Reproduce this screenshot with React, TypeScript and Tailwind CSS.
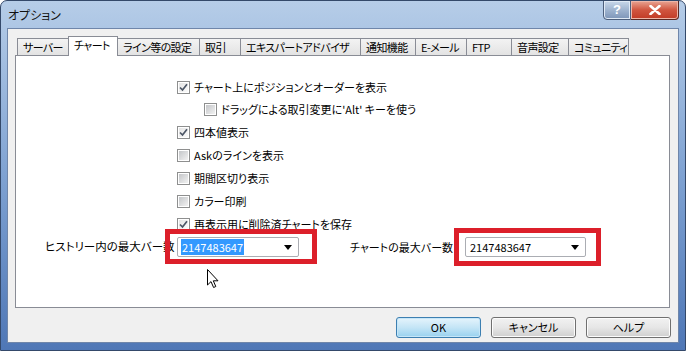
import React from 'react'

const TABS = [
  { label: 'サーバー', w: 52 },
  { label: 'チャート', w: 50, active: true },
  { label: 'ライン等の設定', w: 83 },
  { label: '取引', w: 42 },
  { label: 'エキスパートアドバイザ', w: 121 },
  { label: '通知機能', w: 56 },
  { label: 'E-メール', w: 52 },
  { label: 'FTP', w: 46 },
  { label: '音声設定', w: 58 },
  { label: 'コミュニティ', w: 61 },
]

const OPTIONS = [
  { label: 'チャート上にポジションとオーダーを表示', checked: true, h: 'h-[21px]' },
  { label: "ドラッグによる取引変更に'Alt' キーを使う", checked: false, sub: true },
  { label: '四本値表示', checked: true },
  { label: 'Askのラインを表示', checked: false },
  { label: '期間区切り表示', checked: false },
  { label: 'カラー印刷', checked: false },
  { label: '再表示用に削除済チャートを保存', checked: true },
]

function CheckBox({ checked }: { checked: boolean }) {
  return (
    <span className="w-[13px] h-[13px] border border-[#8e8f8f] bg-white p-px flex-shrink-0 flex">
      <span
        className={`flex-1 flex items-center justify-center bg-gradient-to-br ${
          checked ? 'from-[#e4e4e4] to-[#fbfbfb]' : 'from-[#c4c6c9] to-[#f2f2f2]'
        }`}
      >
        {checked && (
          <svg width="9" height="9" viewBox="0 0 9 9">
            <path d="M1 4.5 L3.5 7 L8 1.2" fill="none" stroke="#4c5666" strokeWidth="1.7" />
          </svg>
        )}
      </span>
    </span>
  )
}

function Combo({ value, selected, w }: { value: string; selected?: boolean; w: string }) {
  return (
    <div className={`${w} h-[20px] border border-[#abadb3] rounded-[2px] bg-white flex items-center pl-[3px] pr-[6px]`}>
      <span className={`flex-1 leading-[14px] ${selected ? '' : 'pl-px'}`}>
        <span className={selected ? 'bg-[#3399ff] text-white px-px' : ''}>{value}</span>
      </span>
      <svg width="8" height="5" viewBox="0 0 8 5">
        <path d="M0 0 H8 L4 5 Z" fill="#000" />
      </svg>
    </div>
  )
}

function Button({ label, primary }: { label: string; primary?: boolean }) {
  return (
    <button
      className={`w-[85px] h-[21px] rounded-[3px] border flex items-center justify-center text-[11px] ${
        primary
          ? 'border-[#3c7fb1] bg-gradient-to-b from-[#e5f4fc] via-[#c4e5f6] to-[#98d1ef] shadow-[inset_0_0_0_1px_#c6e6f8]'
          : 'border-[#707070] bg-gradient-to-b from-[#f2f2f2] via-[#e6e6e6] to-[#cfcfcf] shadow-[inset_0_0_0_1px_#fcfcfc]'
      }`}
    >
      {label}
    </button>
  )
}

export default function App() {
  return (
    <div className="w-[686px] h-[351px] relative flex flex-col rounded-t-[7px] border border-[#34496a] bg-gradient-to-b from-[#b6cde8] via-[#7fa2d2] to-[#4f77b6] text-black text-[11px] font-['Noto_Sans_CJK_JP','Noto_Sans',sans-serif] [font-feature-settings:'palt'] overflow-hidden">
      {/* タイトルバー */}
      <div className="h-[27px] flex items-center pl-[7px] text-[12px] text-[#111]">オプション</div>

      {/* ウィンドウ操作ボタン */}
      <div className="absolute top-[-1px] right-[6px] flex">
        <div className="w-[28px] h-[20px] rounded-bl-[4px] border border-[#4d5f7c] bg-gradient-to-b from-[#c9d8ea] via-[#9eb3cf] to-[#7d95b8] flex items-center justify-center text-white font-bold text-[13px] font-['Liberation_Sans',sans-serif] shadow-[inset_0_0_0_1px_#dfe9f5]">
          ?
        </div>
        <div className="w-[48px] h-[20px] rounded-br-[4px] border border-l-0 border-[#5a2a24] bg-gradient-to-b from-[#e8a493] via-[#d0553f] to-[#c13a25] flex items-center justify-center shadow-[inset_0_0_0_1px_#eeb6a8]">
          <svg width="12" height="10" viewBox="0 0 12 10">
            <path d="M1.5 1 L10.5 9 M10.5 1 L1.5 9" stroke="#fff" strokeWidth="2.6" strokeLinecap="round" />
          </svg>
        </div>
      </div>

      {/* クライアント領域 */}
      <div className="mx-[6px] mb-[7px] flex-1 bg-[#f0f0f0] border border-[#6f86aa] flex flex-col pt-[7px] px-[7px]">
        {/* タブ */}
        <div className="h-[20px] flex items-end pl-[2px] relative z-10">
          {TABS.map((t, i) => (
            <div
              key={t.label}
              style={{ width: t.w }}
              className={`border border-b-0 border-[#898c95] pl-[5px] flex items-center whitespace-nowrap leading-none tracking-[-0.6px] ${
                i > 0 ? '-ml-px' : ''
              } ${
                t.active
                  ? 'h-[20px] bg-white relative z-10 pb-[2px]'
                  : 'h-[17px] mb-px bg-gradient-to-b from-[#f3f3f3] to-[#e3e3e3]'
              }`}
            >
              {t.label}
            </div>
          ))}
        </div>

        {/* パネル */}
        <div className="w-[655px] h-[253px] -mt-px bg-white border border-[#898c95] relative pt-[21px]">
          <div className="flex flex-col ml-[161px]">
            {OPTIONS.map(o => (
              <div
                key={o.label}
                className={`${o.h ?? 'h-[23px]'} flex items-center gap-[4px] whitespace-nowrap ${o.sub ? 'ml-[27px]' : ''}`}
              >
                <CheckBox checked={o.checked} />
                <span>{o.label}</span>
              </div>
            ))}
          </div>

          <div className="flex items-center h-[20px] mt-[1px] ml-[29px] whitespace-nowrap">
            <span className="w-[132px] text-[11.5px]">ヒストリー内の最大バー数</span>
            <Combo value="2147483647" selected w="w-[122px]" />
            <span className="w-[115px] ml-[51px]">チャートの最大バー数</span>
            <Combo value="2147483647" w="w-[121px]" />
          </div>

          {/* 注釈の赤枠 */}
          <div className="absolute left-[149px] top-[173px] w-[152px] h-[35px] border-[5px] border-[#dc1f2a]" />
          <div className="absolute left-[438px] top-[172px] w-[147px] h-[38px] border-[5px] border-[#dc1f2a]" />

          {/* マウスカーソル */}
          <svg className="absolute left-[191px] top-[213px]" width="12" height="20" viewBox="0 0 12 20">
            <path
              d="M0.5 0.5 L0.5 16 L4 12.6 L6.6 18.5 L8.8 17.5 L6.3 11.8 L11 11.8 Z"
              fill="#fff"
              stroke="#000"
              strokeWidth="1"
              strokeLinejoin="round"
            />
          </svg>
        </div>

        {/* ボタン */}
        <div className="w-[656px] flex justify-end gap-[10px] mt-[9px]">
          <Button label="OK" primary />
          <Button label="キャンセル" />
          <Button label="ヘルプ" />
        </div>
      </div>
    </div>
  )
}
